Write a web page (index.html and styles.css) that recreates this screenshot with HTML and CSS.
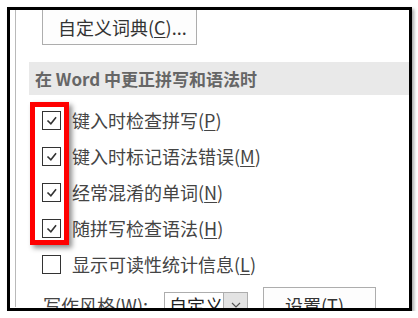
FILE: index.html
```html
<!DOCTYPE html>
<html lang="zh-CN">
<head>
    <meta charset="UTF-8">
    <meta name="viewport" content="width=device-width, initial-scale=1.0">
    <title>校对选项</title>
    <link rel="stylesheet" href="styles.css">
</head>
<body>
    <div class="frame">
        <div class="panel">
            <button class="btn dict-btn">自定义词典(<u>C</u>)...</button>

            <div class="section-head">在 Word 中更正拼写和语法时</div>

            <div class="options">
                <label class="opt">
                    <span class="box"><svg viewBox="0 0 19 19"><polyline points="5,9.5 8.8,13.2 14.6,6"/></svg></span>
                    <span>键入时检查拼写(<u>P</u>)</span>
                </label>
                <label class="opt">
                    <span class="box"><svg viewBox="0 0 19 19"><polyline points="5,9.5 8.8,13.2 14.6,6"/></svg></span>
                    <span>键入时标记语法错误(<u>M</u>)</span>
                </label>
                <label class="opt">
                    <span class="box"><svg viewBox="0 0 19 19"><polyline points="5,9.5 8.8,13.2 14.6,6"/></svg></span>
                    <span>经常混淆的单词(<u>N</u>)</span>
                </label>
                <label class="opt">
                    <span class="box"><svg viewBox="0 0 19 19"><polyline points="5,9.5 8.8,13.2 14.6,6"/></svg></span>
                    <span>随拼写检查语法(<u>H</u>)</span>
                </label>
                <label class="opt">
                    <span class="box"></span>
                    <span>显示可读性统计信息(<u>L</u>)</span>
                </label>
            </div>

            <div class="style-row">
                <span class="style-label">写作风格(<u>W</u>):</span>
                <div class="select">
                    <span class="select-value">自定义</span>
                    <span class="select-arrow"><svg viewBox="0 0 10 6"><polyline points="1,1 5,5 9,1"/></svg></span>
                </div>
                <button class="btn settings-btn">设置(<u>T</u>)...</button>
            </div>
        </div>

        <!-- red marker drawn over the four checked boxes -->
        <div class="highlight"></div>
    </div>
</body>
</html>
```

FILE: styles.css
```css
body { margin: 0; background: #fff; font-family: "Noto Sans CJK SC", "Noto Sans", sans-serif; }
u { text-decoration: underline; text-underline-offset: 2px; }

.frame { position: relative; margin: 7px 0 0 7px; width: 399px; height: 298px; border: 3px solid #000; overflow: hidden; background: #fff; box-shadow: 2px 2px 3px rgba(0, 0, 0, 0.35); }
.panel { margin-left: 5px; height: 100%; border-left: 1px solid #b9b9b9; }

.btn { display: block; box-sizing: border-box; height: 36px; border: 1px solid #adadad; background: #fdfdfd; color: #333; font-family: inherit; font-size: 18px; line-height: 34px; text-align: left; padding: 0; }
.dict-btn { margin: -1px 0 0 26px; width: 155px; padding-left: 15px; }

.section-head { margin: 17px 0 0 13px; height: 33px; padding-left: 6px; background: #e9e9e9; color: #666; font-size: 17px; font-weight: bold; line-height: 33px; white-space: nowrap; }

.options { padding-top: 7px; margin-left: 26px; }
.opt { display: flex; align-items: center; gap: 11px; height: 36px; color: #444; font-size: 18px; white-space: nowrap; }
.box { flex: none; box-sizing: border-box; width: 19px; height: 19px; border: 1px solid #333; background: #fff; }
.box svg { display: block; width: 17px; height: 17px; }
.box polyline { fill: none; stroke: #333; stroke-width: 1.8; }

.style-row { display: flex; align-items: center; height: 36px; margin: 5px 0 0 27px; color: #444; font-size: 18px; white-space: nowrap; }
.style-label { flex: none; width: 121px; }
.select { flex: none; display: flex; box-sizing: border-box; width: 84px; height: 26px; border: 1px solid #adadad; background: #fff; }
.select-value { flex: 1; padding-left: 4px; line-height: 24px; color: #222; }
.select-arrow { width: 25px; display: flex; align-items: center; justify-content: center; background: #e3e3e3; border-left: 1px solid #adadad; }
.select-arrow svg { width: 10px; height: 6px; }
.select-arrow polyline { fill: none; stroke: #555; stroke-width: 1.2; }
.settings-btn { flex: none; margin-left: 15px; width: 113px; padding-left: 21px; }

.highlight { position: absolute; left: 20px; top: 92px; width: 39px; height: 143px; box-sizing: border-box; border: 5px solid #f00; box-shadow: 3px 3px 5px rgba(0, 0, 0, 0.45); }
```
